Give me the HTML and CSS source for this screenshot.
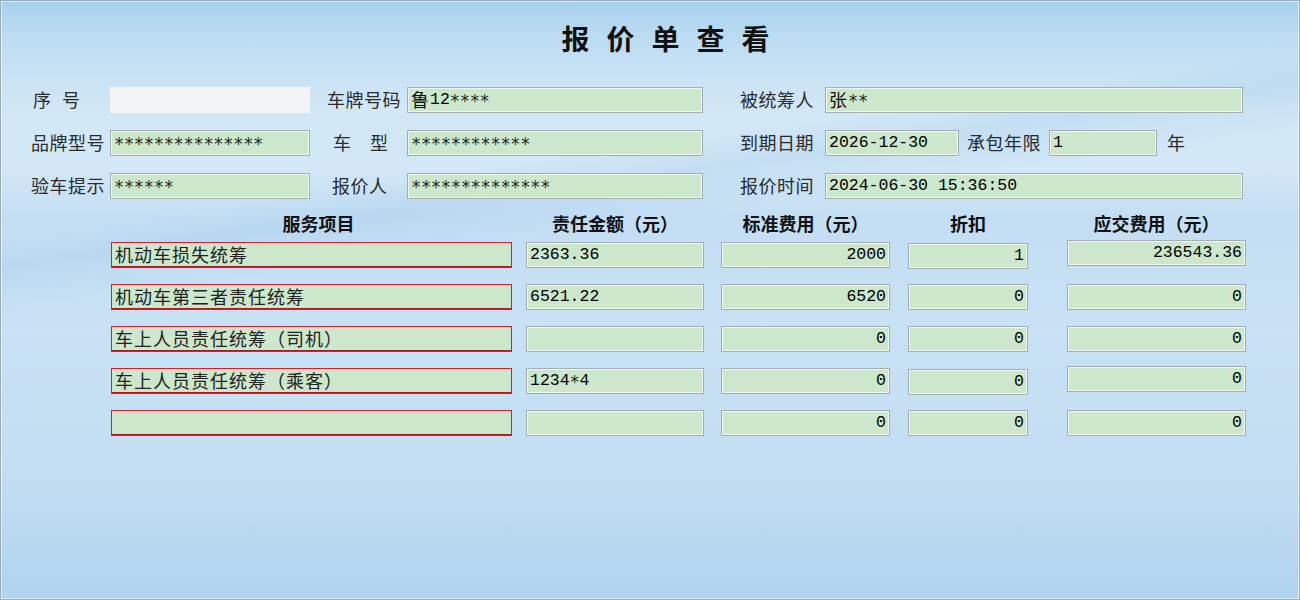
FILE: index.html
```html
<!DOCTYPE html>
<html lang="zh-CN">
<head>
    <meta charset="UTF-8">
    <meta name="viewport" content="width=device-width, initial-scale=1.0">
    <title>报价单查看</title>
    <link rel="stylesheet" href="styles.css">
</head>
<body>
    <div class="window">
        <h1 class="title">报价单查看</h1>

        <!-- Header fields -->
        <div class="info">
            <div class="info-row">
                <span class="lbl lbl-1 lbl-seq">序号</span>
                <div class="field field-blank w-200"></div>
                <span class="lbl lbl-2">车牌号码</span>
                <div class="field w-296"><span class="cn">鲁</span>12<span class="mask">****</span></div>
                <span class="lbl lbl-3">被统筹人</span>
                <div class="field w-418"><span class="cn">张</span><span class="mask">**</span></div>
            </div>
            <div class="info-row">
                <span class="lbl lbl-1">品牌型号</span>
                <div class="field w-200"><span class="mask">***************</span></div>
                <span class="lbl lbl-2 lbl-type">车型</span>
                <div class="field w-296"><span class="mask">************</span></div>
                <span class="lbl lbl-3">到期日期</span>
                <div class="field w-134">2026-12-30</div>
                <span class="lbl lbl-term">承包年限</span>
                <div class="field w-108">1</div>
                <span class="lbl lbl-year">年</span>
            </div>
            <div class="info-row">
                <span class="lbl lbl-1">验车提示</span>
                <div class="field w-200"><span class="mask">******</span></div>
                <span class="lbl lbl-2 lbl-quoter">报价人</span>
                <div class="field w-296"><span class="mask">**************</span></div>
                <span class="lbl lbl-3">报价时间</span>
                <div class="field w-418">2024-06-30 15:36:50</div>
            </div>
        </div>

        <!-- Service items -->
        <div class="items">
            <div class="items-head">
                <span class="col-name">服务项目</span>
                <span class="col-amount">责任金额（元）</span>
                <span class="col-std">标准费用（元）</span>
                <span class="col-disc">折扣</span>
                <span class="col-due">应交费用（元）</span>
            </div>

            <div class="item-row">
                <div class="field field-item col-name">机动车损失统筹</div>
                <div class="field col-amount">2363.36</div>
                <div class="field num col-std">2000</div>
                <div class="field num col-disc nudge-down">1</div>
                <div class="field num col-due nudge-up">236543.36</div>
            </div>
            <div class="item-row">
                <div class="field field-item col-name">机动车第三者责任统筹</div>
                <div class="field col-amount">6521.22</div>
                <div class="field num col-std">6520</div>
                <div class="field num col-disc">0</div>
                <div class="field num col-due">0</div>
            </div>
            <div class="item-row">
                <div class="field field-item col-name">车上人员责任统筹（司机）</div>
                <div class="field col-amount"></div>
                <div class="field num col-std">0</div>
                <div class="field num col-disc">0</div>
                <div class="field num col-due">0</div>
            </div>
            <div class="item-row">
                <div class="field field-item col-name">车上人员责任统筹（乘客）</div>
                <div class="field col-amount">1234<span class="mask">*</span>4</div>
                <div class="field num col-std">0</div>
                <div class="field num col-disc nudge-down">0</div>
                <div class="field num col-due nudge-up">0</div>
            </div>
            <div class="item-row">
                <div class="field field-item col-name"></div>
                <div class="field col-amount"></div>
                <div class="field num col-std">0</div>
                <div class="field num col-disc">0</div>
                <div class="field num col-due">0</div>
            </div>
        </div>
    </div>
</body>
</html>
```

FILE: styles.css
```css
/* Reset and base styles */
* {
    box-sizing: border-box;
    margin: 0;
    padding: 0;
}

body {
    font-family: "Noto Sans CJK SC", sans-serif;
    font-size: 18px;
    color: #2b2b2b;
    background: #ffffff;
}

/* Form window */
.window {
    width: 1300px;
    height: 600px;
    border: 1px solid #9eadba;
    box-shadow: inset 0 0 0 1px rgba(255, 255, 255, 0.55);
    background:
        linear-gradient(172deg, rgba(255, 255, 255, 0) 30%, rgba(150, 195, 230, 0.25) 34%, rgba(255, 255, 255, 0) 40%),
        linear-gradient(to bottom,
            #a6d0ec 0%,
            #bcdcf2 6%,
            #d2e7f6 18%,
            #d3e7f6 28%,
            #c3def3 36%,
            #c8e1f4 55%,
            #c2ddf2 80%,
            #afd3ef 100%);
    padding-top: 17px;
}

.title {
    height: 40px;
    line-height: 40px;
    font-size: 28px;
    font-weight: bold;
    color: #111;
    text-align: center;
    letter-spacing: 17px;
    padding-left: 48px;
}

/* Header fields */
.info {
    margin-top: 29px;
    padding-left: 30px;
    display: flex;
    flex-direction: column;
    gap: 17px;
}

.info-row {
    display: flex;
    align-items: center;
    height: 26px;
}

.lbl {
    white-space: nowrap;
    letter-spacing: 0.5px;
    line-height: 26px;
    margin-top: -2px;
}

.lbl-1 { width: 79px; }
.lbl-2 { width: 97px; padding-left: 17px; }
.lbl-3 { width: 122px; padding-left: 37px; }
.lbl-term { width: 90px; padding-left: 8px; }
.lbl-year { padding-left: 10px; }

.lbl-seq { padding-left: 2px; letter-spacing: 11px; }
.lbl-type { padding-left: 23px; letter-spacing: 19px; }
.lbl-quoter { padding-left: 22px; }

.field {
    height: 26px;
    line-height: 24px;
    padding: 0 3px;
    background-color: #cce7cb;
    border: 1px solid #a4adb4;
    box-shadow: inset 0 0 0 1px #eef6ee;
    font-family: "Liberation Mono", "Noto Sans CJK SC", monospace;
    font-size: 16.5px;
    color: #000;
    white-space: nowrap;
    overflow: hidden;
}

.field .cn {
    display: inline-block;
    vertical-align: top;
    line-height: 23px;
    font-family: "Noto Sans CJK SC", sans-serif;
    font-size: 18px;
    padding-right: 1px;
    color: #111;
}

/* masked characters sit on the middle of the line */
.mask {
    font-family: "DejaVu Sans Mono", monospace;
    font-size: 17px;
    letter-spacing: -0.3px;
    vertical-align: -3px;
    color: #1f2a1f;
}

.field-blank {
    background-color: #f2f4f6;
    border-color: #f2f4f6;
    box-shadow: none;
}

.w-200 { width: 200px; }
.w-296 { width: 296px; }
.w-418 { width: 418px; }
.w-134 { width: 134px; }
.w-108 { width: 108px; }

/* Service items grid */
.items {
    margin-top: 12px;
    margin-left: 110px;
    width: 1135px;
}

.items-head,
.item-row {
    display: grid;
    grid-template-columns: 401px 192px 186px 138px 218px;
}

.items-head {
    height: 24px;
    line-height: 24px;
    font-weight: bold;
    color: #111;
    text-align: center;
    margin-bottom: 7px;
}

.item-row {
    height: 26px;
    margin-bottom: 16px;
    align-items: start;
}

.col-amount { width: 178px; justify-self: end; }
.col-std { width: 169px; justify-self: end; }
.col-disc { width: 120px; justify-self: end; }
.col-due { width: 179px; justify-self: end; }

.items-head .col-name { padding-left: 14px; }

.field-item {
    border-color: #d11f2b;
    box-shadow: inset 0 -1px 0 #b8121d;
    font-family: "Noto Sans CJK SC", sans-serif;
    font-size: 18px;
    line-height: 23px;
    letter-spacing: 1px;
    color: #222;
}

.num {
    text-align: right;
}

.nudge-up { margin-top: -2px; }
.nudge-down { margin-top: 1px; }
```
